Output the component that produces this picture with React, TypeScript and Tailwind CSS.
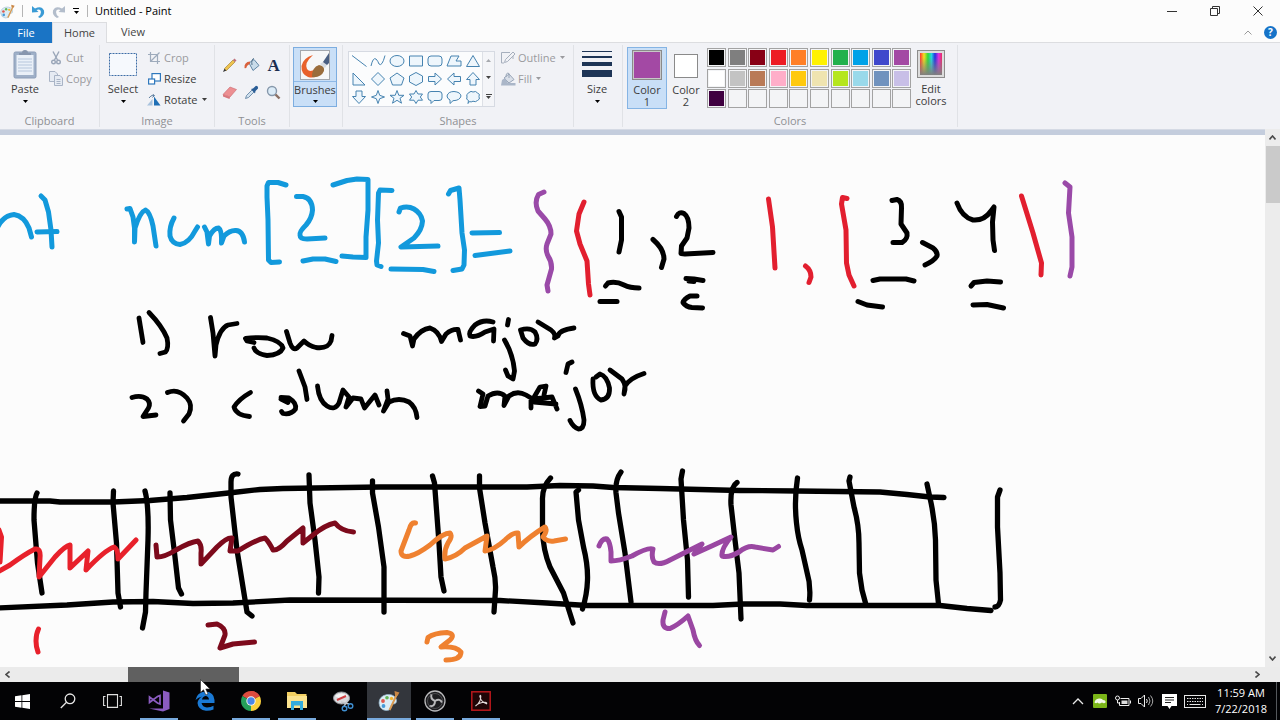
import type { ReactNode } from 'react'
import clsx from 'clsx'

const PALETTE: string[] = [
  '#000000', '#7f7f7f', '#880015', '#ed1c24', '#ff7f27', '#fff200', '#22b14c', '#00a2e8', '#3f48cc', '#a349a4',
  '#ffffff', '#c3c3c3', '#b97a57', '#ffaec9', '#ffc90e', '#efe4b0', '#b5e61d', '#99d9ea', '#7092be', '#c8bfe7',
  '#3f0040', '', '', '', '', '', '', '', '', '',
]

// one entry per gallery cell, drawn on a 16x14 grid
const SHAPES: { name: string; d: string }[] = [
  { name: 'Line', d: 'M1 1.5 L15.5 12.5' },
  { name: 'Curve', d: 'M1 12 Q3 3 6 5 Q8 7 9 10 Q12 13 15 1.5' },
  { name: 'Oval', d: 'M1 7 A7 5.5 0 1 0 15 7 A7 5.5 0 1 0 1 7 Z' },
  { name: 'Rectangle', d: 'M1.5 2 H14.5 V12 H1.5 Z' },
  { name: 'Rounded rectangle', d: 'M4 2 H12 Q15 2 15 5 V9 Q15 12 12 12 H4 Q1 12 1 9 V5 Q1 2 4 2 Z' },
  { name: 'Polygon', d: 'M5 2 H13 L10 7 H15 V12 H1 Z' },
  { name: 'Triangle', d: 'M8 1.5 L14.5 12.5 H1.5 Z' },
  { name: 'Right triangle', d: 'M2 1 V13 H14 Z' },
  { name: 'Diamond', d: 'M8 .5 L14.5 7 L8 13.5 L1.5 7 Z' },
  { name: 'Pentagon', d: 'M8 1 L15 6 L12.5 13 H3.5 L1 6 Z' },
  { name: 'Hexagon', d: 'M8 .5 L14.5 4 V10 L8 13.5 L1.5 10 V4 Z' },
  { name: 'Right arrow', d: 'M1.5 4.5 H8 V1 L14.5 7 L8 13 V9.5 H1.5 Z' },
  { name: 'Left arrow', d: 'M14.5 4.5 H8 V1 L1.5 7 L8 13 V9.5 H14.5 Z' },
  { name: 'Up arrow', d: 'M5 13 V7.5 H1.5 L8 .5 L14.5 7.5 H11 V13 Z' },
  { name: 'Down arrow', d: 'M5 1 V6.5 H1.5 L8 13.5 L14.5 6.5 H11 V1 Z' },
  { name: 'Four-point star', d: 'M8 .5 L9.7 5.3 L14.5 7 L9.7 8.7 L8 13.5 L6.3 8.7 L1.5 7 L6.3 5.3 Z' },
  { name: 'Five-point star', d: 'M8 .5 L9.8 5.3 H15 L11 8.3 L12.5 13.2 L8 10.3 L3.5 13.2 L5 8.3 L1 5.3 H6.2 Z' },
  { name: 'Six-point star', d: 'M8 .5 L10 4 H14.5 L12.3 7 L14.5 10.2 H10 L8 13.5 L6 10.2 H1.5 L3.7 7 L1.5 4 H6 Z' },
  { name: 'Rounded callout', d: 'M4 1.5 H12 Q15 1.5 15 4 V8 Q15 10.5 12 10.5 H7 L4 13.5 V10.5 Q1 10.5 1 8 V4 Q1 1.5 4 1.5 Z' },
  { name: 'Oval callout', d: 'M4 10 Q1 8.5 1 6 Q2 1.5 8 1.5 Q14.5 2 15 6 Q14 10.5 7 10.7 L4 13.5 Z' },
  { name: 'Cloud callout', d: 'M4 2.5 Q6 .5 8 2 Q11 .5 12.5 3 Q15.5 4 14 6.5 Q15.5 9.5 12.5 10.5 Q10.5 12.5 8 11.2 Q6 12.5 4.5 11.5 L3 13.5 L3.5 10.5 Q.5 9.5 2 7 Q.5 4.5 4 2.5 Z' },
]

type Stroke = { color: string; width: number; d: string[] }

const STROKES: Stroke[] = [
  // memory row
  {
    color: '#000000',
    width: 5.3,
    d: [
      'M-5 501 L50 501 L60 502 L113 502 L150 500.5 L187 497.5 L233 492.5 L260 489.5 L283 488.5 L380 487 L527 487 L560 485.5 L593 486 L613 487.5 L660 488.5 L740 490.5 L797 491 L880 492 L907 494.5 L930 497 L944 497.5',
      'M-5 608 L67 605 L113 602 L153 601.5 L193 603.5 L233 603 L290 600 L500 600.5 L547 603 L587 605.5 L713 605.5 L743 604 L780 604 L807 605.5 L940 605.5 L967 608.5 L991 610.5',
      'M37 493 Q34 498 34 520 L37.5 563 L42 593',
      'M113.5 491 L113 503 L116.5 543 L118 593 L120.5 607',
      'M145 491 Q149 506 148 540 L146 593 L145.5 612 L142.5 628',
      'M170 493 L170.5 520 L175 557 L178.5 588 L181.5 594',
      'M238 474 Q231 473 231 482 L231 497 L237 550 L247 612 L252 616',
      'M309 475 L310 503 L315 540 L319 577 L318.5 593',
      'M372.5 481 L372.5 493 L378.5 527 L384 567 L384 612',
      'M432.5 476 L434.5 483 L436 503 L439 543 L441 577 L444 591',
      'M479.5 476 L479.5 488 L485 523 L493 567 Q496 580 495.5 590 L494 612',
      'M550.5 478 Q542 487 542.5 500 L542.5 530 Q543 550 550 567 L563.5 593 L573 623',
      'M578.5 490 L576 492 L578.5 520 L583.5 547 Q588 565 587.5 580 Q587 595 582.5 609',
      'M621 472 Q615 480 616 493 L618.5 513 L625 553 L631 602',
      'M682.5 471 L681 479 L683.5 520 L687.5 560 L688.5 597',
      'M737 482.5 Q730 487 731 505 L735 540 L739 573 L741 619',
      'M797.5 478 Q794 500 796.5 523 Q798 538 802 550 L806.5 570 Q811 585 809.5 600',
      'M850 477 L849 481 L854 507 Q859 525 859 543 L859.5 573 L862 590 L865.5 603',
      'M927 484 L930 498 Q935 520 935.5 540 L936 580 L938.5 604',
      'M1000 490 L997.5 497 L997.5 527 L1000 573 L1000.5 600 Q999 607 995 607',
    ],
  },
  // declaration
  {
    color: '#1299dc',
    width: 5,
    d: [
      'M-4 230 L0 223 Q6 215 14 214.5 Q24 216 29 228 L31.5 237',
      'M41 196 L45 200 L48.5 212 L51 230 L52 247',
      'M37 232 L57 231.5',
      'M127 209 L130 208.5 L133 217 L134.5 228 L134.5 242 L135 228 Q140 212 145.5 210 Q150 212 153 226 L156 246',
      'M174 218 Q169 227 170 236 Q172 244 180 244.5 Q189 243 195 231 L197.5 227',
      'M204.5 227 L207 232 L208.5 244 L209.5 236 Q214 228 218.5 228 Q222 230 221.5 243 L224 236 Q230 230 236 230.5 Q243 231 244.5 242',
      'M286 185 L278 182.5 L268.5 182.5 L267 186 L267 197 L268 220 L268.5 260 L271 262.5 L279.5 262',
      'M296.5 196.5 L303 196.5 Q312 198 312.5 210 Q312 218 306 225 Q299 232 300 235 Q300 239 307 239 L325 238',
      'M303 261 L313 259 L325 259 L336 261.5',
      'M333 185 L347 180.5 L357 179 L368 179.5 L368 210 L366 237 L366 257.5 L353 257 L342 256',
      'M392 190.5 L380 190 L378.5 193 L377.5 220 L378.5 243 L376.5 261 L377 265 L381 266.5',
      'M399 212 L400.5 208 Q408 205.5 414 209 Q421 213 422.5 221 Q422 230 414 238 L401 247 L438 246',
      'M391 269 L423 269.5 L434 271.5',
      'M448.5 194 L450.5 190.5 L459 188 L460 200 L462 233 L464.5 250 L464 265 L462 269 L453 270.5',
      'M472 233 L499.5 232.5',
      'M475 255.5 L510 251',
    ],
  },
  {
    color: '#9a4aa8',
    width: 5,
    d: [
      'M544 192 L538.5 194.5 Q534 202 538 211 L545 219 Q551 226 551 234 L547 244 Q545 250 548 256 Q552 262 551.5 269 L547 285 L548 291',
      'M1065 183 L1070 187 L1068.5 213 L1072 237 L1072 267 L1070 276',
    ],
  },
  {
    color: '#e21f2f',
    width: 5,
    d: [
      'M584 202 L579 214 L576.5 231 L580 244 L587 261 L588.5 284 L590 295',
      'M768.5 199 L772.5 227 L775 268',
      'M805.5 266 Q811 270 811 277 L809 282.5',
      'M847 198.5 L842.5 197.5 L841.5 204 L846 230 L846.5 263 L849 275 L854 286',
      'M1021.5 196 L1033 233 L1041.5 263 L1041 275',
    ],
  },
  {
    color: '#000000',
    width: 5,
    d: [
      'M619 211.5 L621.5 217 L621.5 240 L619 252',
      'M653 239.5 Q664 249 664 259 L661.5 267.5',
      'M676.5 216.5 Q679 211 684 213.5 Q689 217 689 228 L687 238 L681.5 246 L681 253.5 L685 254 L713 252.5',
      'M605.5 286 L608 283 Q616 281 624 285 Q630 288 639 288',
      'M600 301.5 L617 301.5',
      'M686 278.5 L694 279 L703 280.5 M689 281 L694 281.5',
      'M697 296 L690 296 Q684 299 683 302.5 Q686 307 692 307.5 L702.5 308',
      'M892 200.5 L897 199.5 Q902 201 901.5 208 L901 224 L907 233 Q908 239 902 242.5 L893 242.5',
      'M922.5 242.5 L933 248 Q938 252 937 256 Q934 261 925 265',
      'M957 203 Q962 217 973 220 Q984 221 991 211 L994 207 L992.5 222 L993 240 L994.5 250.5',
      'M873 280.5 L880 279 L906 279 L914 281',
      'M858 301.5 L867 305 L882.5 307',
      'M971 286 L974 282.5 L987 281 L1000.5 282',
      'M973 305 L987 304.5 L1003.5 308',
    ],
  },
  // notes
  {
    color: '#000000',
    width: 4.8,
    d: [
      'M139 318 L143 342.5',
      'M149 312.5 Q162 326 167 338 Q169 348 165.5 352 L160 353.5',
      'M210.5 317.5 L213 333 L215 356 L216 345 Q220 328 228 325 L237 323.5',
      'M254 342.5 L247 341 L245.5 338.5 Q256 337 267 338 Q281 341 283 348 Q280 355 267 355.5 Q256 354 254 348',
      'M286.5 331.5 L290 343 Q293 351 297 348 L304 341 Q309 346 316 347.5 Q328 349 331 341 L332 335.5',
      'M403.5 333.5 L410 336 L412.5 346 L414 339 Q421 329 430 328 Q439 331 441.5 341.5 L446 334 Q452 329 458 329.5 L460.5 340',
      'M493 322 Q483 319 475 325 Q468 332 470 336 Q476 338 485 332 L494 329 L493.5 341',
      'M508.5 319.5 L507.5 325',
      'M504.5 340 Q513 354 514.5 371 L513 379 L508 376 L505.5 370',
      'M520.5 330 L523 338 Q529 346 535 344 Q539 339 535 332 Q530 327 520.5 330',
      'M538 322 L551 330 Q556 334 554.5 338 L558 336 Q559 330 574 328',
      'M132 397.5 Q141 394.5 147 399 Q151 403 148.5 408 L143 416.5 L156 415',
      'M167.5 392.5 Q178 388 187 398 Q193 405 189 414 L183.5 421',
      'M250.5 392.5 Q239 399 234 407 Q236 415 249.5 416.5',
      'M281 397.5 L289 398 Q297 403 295.5 409 Q291 415 283 413.5 L281.5 411.5 M281 399 L288 402.5',
      'M299 371 L305 387 L307 399.5',
      'M317.5 386 Q319 401 327 406 Q335 411 339 403 L343 390 L349 397 L346 407 L353 398 L361 399 L364.5 408 L375 395 L379 405',
      'M387 391 L388 399 L383.5 411 L389 402 Q399 397 409 402 Q416 407 417 417.5',
      'M478.5 391 L483 394 L480 406.5 L485 406 L488 396 Q498 390 505 396 L504 405.5 L509 396 Q517 390 526 395 L531 398 L531 408',
      'M544 395 L546 386 L540 387 L533 399 L552 397 L557 409 M534 402 L556 404',
      'M566 372.5 L568 364 L572 362',
      'M575.5 389 Q582 405 584 420 Q584 429 578.5 429 Q573 427 570 420.5',
      'M593 379 Q592 396 601 400 Q610 399 609.5 388 Q607 376 600 374 L596 377',
      'M610 370 L622 379 Q627 386 624 394 L625 386 Q630 378 644 373.5',
    ],
  },
  // values stored in each cell
  {
    color: '#e8212b',
    width: 5,
    d: [
      'M-1 530 L1.5 537 L0 562',
      'M-4 573 L10 565 Q25 554 35 549 Q41 548 40 558 L39 577 L55 557 Q65 546 70 545 L70 568 L88 551 L86 570 Q105 550 114 547 Q118 549 118 559 L136 540',
      'M38.5 629 Q36 634 36 641 Q36 647 38 652',
    ],
  },
  {
    color: '#7d0a1c',
    width: 5,
    d: [
      'M156 545 L157 557 Q165 557 176 550 Q190 542 198 541 Q202 545 201 553 L201 564 L217 547 Q227 537 232 538 L230 551 L238 551 Q255 540 265 538 Q269 542 273 550 Q278 551 287 541 L303 528 L303 543 L313 535 Q325 525 335 523 Q341 531 353.5 532',
      'M208 625 L217 624 Q226 628 225 635 L220 648 L233 644 L254.5 642',
    ],
  },
  {
    color: '#ef8130',
    width: 5,
    d: [
      'M415.5 523 Q411 522 409 530 L401 551 Q401 558 410 556 Q418 554 430 545 Q443 533 450 533 Q453 536 448 543 Q444 550 445 559 Q456 557 465 548 L487 536 L485 551 Q494 550 505 540 Q513 532 518 533 L519 547 Q530 536 545 527 Q548 530 543 537 Q547 542 554 541 L565.5 539',
      'M427 642 L428 637.5 Q434 633 447 632.5 Q456 634 450 640 L441 647 Q456 646 461 652 Q461 660 446 660',
    ],
  },
  {
    color: '#9a47a2',
    width: 5,
    d: [
      'M599 546 Q602 538 607 539 Q610 542 611 552 L611 561 Q619 561 632 556 Q648 547 653 549 Q651 557 654 562 Q659 566 670 560 L702 544 L694 554 Q712 546 731 537 Q721 549 722 556 Q729 558 739 552 Q748 545 755 547 L773 550 L778.5 546.5',
      'M665 612 L663 620 Q662 629 670 628.5 Q678 625 688 616 L693 630 Q695 641 699.5 645.5',
    ],
  },
]

function Caret({ className }: { className?: string }) {
  return (
    <svg className={className} width="5" height="3" viewBox="0 0 5 3" aria-hidden="true">
      <path d="M0 0 H5 L2.5 3 Z" fill="currentColor" />
    </svg>
  )
}

function PaintLogo({ size }: { size: number }) {
  return (
    <svg width={size} height={size} viewBox="0 0 22 22" aria-hidden="true">
      <path d="M1 13 Q1 6 9 4.500 Q17 4 18.500 10 Q19 14 15 14 Q12.500 14.500 13 17 Q12.500 21 7.500 20.500 Q1.500 19.500 1 13 Z" fill="#dcecf5" stroke="#8fb0c6" strokeWidth=".7" />
      <circle cx="5" cy="11" r="1.900" fill="#e0584e" />
      <circle cx="9" cy="7.700" r="1.800" fill="#62b558" />
      <circle cx="13.500" cy="8.500" r="1.700" fill="#f2b632" />
      <circle cx="5.500" cy="16" r="1.900" fill="#469ad8" />
      <path d="M18.500 5 L13 17 L11.500 20" stroke="#d99a52" strokeWidth="2" fill="none" />
      <path d="M16.500 1 L21.500 2.500 L19.500 6 L17 5 Z" fill="#c98644" />
    </svg>
  )
}

function RibbonGroup({ label, className, children }: { label?: string; className: string; children: ReactNode }) {
  return (
    <section className={clsx('my-0.5 flex shrink-0 flex-col border-r border-[#e0e2e6]', className)}>
      <div className="flex flex-1 items-start">{children}</div>
      <div className="h-3 text-center leading-3 text-[#8f9094]">{label}</div>
    </section>
  )
}

function SmallButton({ icon, label, disabled, caret }: { icon: ReactNode; label: string; disabled?: boolean; caret?: boolean }) {
  return (
    <button type="button" disabled={disabled} className={clsx('flex h-[21px] items-center gap-1', disabled ? 'text-[#9a9a9e]' : 'text-[#3c3c3c]')}>
      <span className="flex w-3 justify-center">{icon}</span>
      {label}
      {caret && <Caret />}
    </button>
  )
}

function ClipboardGroup() {
  return (
    <RibbonGroup label="Clipboard" className="w-[100px]">
      <button type="button" className="ml-1 flex w-[42px] flex-col items-center pt-1 text-[#3c3c3c]">
        <svg width="24" height="30" viewBox="0 0 24 30" aria-hidden="true">
          <rect x="1" y="3" width="22" height="26" rx="1.500" fill="#9fb0c8" stroke="#8c9db8" />
          <rect x="3.500" y="6" width="17" height="20" fill="#eaf0f8" />
          <path d="M5 10 H19 M5 13 H19 M5 16 H19 M5 19 H19 M5 22 H19" stroke="#b6c6dc" />
          <path d="M6 6 V4 H9 Q9 1 12 1 Q15 1 15 4 H18 V6 Z" fill="#8796ae" />
        </svg>
        <span className="leading-5">Paste</span>
        <Caret className="mt-px text-black" />
      </button>
      <div className="ml-1 flex flex-col pt-0.5">
        <SmallButton
          disabled
          label="Cut"
          icon={
            <svg width="10" height="14" viewBox="0 0 10 14" fill="none" stroke="#9aa6b8" strokeWidth="1.400" aria-hidden="true">
              <path d="M2 .5 L6.500 9 M8 .5 L3.500 9" />
              <circle cx="2.500" cy="11" r="1.800" />
              <circle cx="7.500" cy="11" r="1.800" />
            </svg>
          }
        />
        <SmallButton
          disabled
          label="Copy"
          icon={
            <svg width="14" height="15" viewBox="0 0 14 15" className="shrink-0" fill="#e6ebf3" stroke="#a9b4c6" aria-hidden="true">
              <path d="M.5 .5 H6 L8.500 3 V10.500 H.5 Z" />
              <path d="M5.500 4.500 H11 L13.500 7 V14.500 H5.500 Z M7.500 8.500 H11.500 M7.500 10.500 H11.500 M7.500 12.500 H11.500" />
            </svg>
          }
        />
      </div>
    </RibbonGroup>
  )
}

function ImageGroup() {
  return (
    <RibbonGroup label="Image" className="w-[115px]">
      <button type="button" className="ml-0.5 flex w-[42px] flex-col items-center pt-1 text-[#3c3c3c]">
        <svg width="30" height="30" viewBox="0 0 30 30" aria-hidden="true">
          <rect x="1.500" y="4.500" width="27" height="22" fill="#f6f9fd" stroke="#3d6da6" strokeDasharray="2 1" />
        </svg>
        <span className="leading-5">Select</span>
        <Caret className="mt-px text-black" />
      </button>
      <div className="ml-1 flex flex-col pt-0.5">
        <SmallButton
          disabled
          label="Crop"
          icon={
            <svg width="12" height="12" viewBox="0 0 12 12" fill="none" stroke="#9eabbc" strokeWidth="1.200" aria-hidden="true">
              <path d="M2.500 0 V9.500 H12 M0 2.500 H9.500 V12 M3 9 L11.500 .5" />
            </svg>
          }
        />
        <SmallButton
          label="Resize"
          icon={
            <svg width="13" height="12" viewBox="0 0 13 12" className="shrink-0" fill="#fff" stroke="#2f78bd" strokeWidth="1.200" aria-hidden="true">
              <rect x="4" y=".6" width="8.400" height="7.400" />
              <rect x=".6" y="6" width="6" height="5" />
            </svg>
          }
        />
        <SmallButton
          caret
          label="Rotate"
          icon={
            <svg width="14" height="12" viewBox="0 0 14 12" className="shrink-0" aria-hidden="true">
              <path d="M0 11.500 H5.500 V5 Z" fill="#a9c3de" />
              <path d="M7 11.500 H13.500 L7 2.500 Z" fill="#1f6fb5" />
              <path d="M2 4 Q3.500 1 7 1.500 M5.500 0 L7.500 1.500 L5.500 3.500" fill="none" stroke="#5e7fa0" />
            </svg>
          }
        />
      </div>
    </RibbonGroup>
  )
}

function ToolsGroup() {
  const tools: { name: string; art: ReactNode }[] = [
    {
      name: 'Pencil',
      art: (
        <>
          <path d="M1 14 L2.500 10.500 L4.500 12.500 Z" fill="#333" />
          <path d="M2.500 10.500 L11 2 L13 4 L4.500 12.500 Z" fill="#eec34e" stroke="#9b7b2c" strokeWidth=".6" />
          <path d="M11 2 L12.500 .5 L14.500 2.500 L13 4 Z" fill="#c0707a" />
        </>
      ),
    },
    {
      name: 'Fill with color',
      art: (
        <>
          <path d="M5 5 L10 1.500 L15 7.500 L9 12.500 Z" fill="#c9dcea" stroke="#6287a5" />
          <path d="M8 7 Q7 1 10 .5" fill="none" stroke="#55738c" />
          <path d="M6 3.500 Q0 4 .5 10 Q2.500 11 3 8 L6 5.500 Z" fill="#d9613d" />
        </>
      ),
    },
    {
      name: 'Text',
      art: (
        <text x="1.500" y="13" className="font-['Liberation_Serif',serif] text-[17px] font-bold" fill="#1c2e50">
          A
        </text>
      ),
    },
    {
      name: 'Eraser',
      art: (
        <>
          <path d="M1 9.500 L8 2 L14.500 4.500 L8 12 Z" fill="#ec8f92" stroke="#c9686e" strokeWidth=".6" />
          <path d="M1 9.500 L8 12 L7.500 14 L1 11.500 Z" fill="#d8767c" />
        </>
      ),
    },
    {
      name: 'Color picker',
      art: (
        <>
          <path d="M1.500 13.500 L2.500 10.500 L8 5 L10 7 L4.500 12.500 Z" fill="#cfe0ee" stroke="#56789a" strokeWidth=".8" />
          <path d="M7 4 L9 3.500 L12 .8 Q14.500 1 14 3.500 L11.500 6 L11 8.500 Z" fill="#2a5d96" />
        </>
      ),
    },
    {
      name: 'Magnifier',
      art: (
        <>
          <circle cx="6" cy="6" r="4.500" fill="#dcecf8" stroke="#8698ab" strokeWidth="1.400" />
          <path d="M9.500 9.500 L13.500 13.500" stroke="#8a6f63" strokeWidth="2.400" />
        </>
      ),
    },
  ]
  return (
    <RibbonGroup label="Tools" className="w-[75px]">
      <div className="mr-auto ml-[7px] grid grid-cols-3 gap-x-[7px] gap-y-3 pt-[13px]">
        {tools.map((tool) => (
          <button key={tool.name} type="button" aria-label={tool.name}>
            <svg width="15" height="15" viewBox="0 0 15 15" className="overflow-visible">{tool.art}</svg>
          </button>
        ))}
      </div>
    </RibbonGroup>
  )
}

function BrushesGroup() {
  return (
    <RibbonGroup className="w-[53px]">
      <button type="button" className="mt-0.5 ml-[3px] flex h-[60px] w-11 flex-col items-center border border-[#7cade0] bg-[#c9dff7] text-[#3c3c3c]">
        <span className="flex h-[34px] w-full justify-center border-b border-[#8fb9e6] pt-0.5">
          <svg width="30" height="30" viewBox="0 0 30 30" aria-hidden="true">
            <rect x=".5" y=".5" width="29" height="29" fill="#f6f7f8" stroke="#a3a7ad" />
            <path d="M13 5 Q3 8 1.500 16 Q1 24 8 27 Q15 29 19 24 L15 19 Q10 23 7 19 Q4 13 13 5 Z" fill="#e8612b" />
            <path d="M12 27 Q12 17 19 15 Q25 16 24 21 Q21 28 12 27 Z" fill="#9a6d3c" />
            <path d="M20 14 L24 11 L27 15 L25 18 Z" fill="#d8dce2" />
            <path d="M23 12 L29 3 V13 L27 15 Z" fill="#4a5f82" />
          </svg>
        </span>
        <span className="leading-4">Brushes</span>
        <Caret className="mt-0.5 text-black" />
      </button>
    </RibbonGroup>
  )
}

function ShapesGroup() {
  return (
    <RibbonGroup label="Shapes" className="w-[231px]">
      <div className="mt-[6px] ml-[5px] flex h-14 border border-[#d6dae2] bg-[#fbfcfd]">
        <div className="grid grid-cols-7">
          {SHAPES.map((shape) => (
            <button key={shape.name} type="button" aria-label={shape.name} className="flex w-[19px] items-center justify-center">
              <svg width="16" height="14" viewBox="0 0 16 14">
                <path d={shape.d} fill={shape.d.endsWith('Z') ? '#eef6fc' : 'none'} stroke="#4683b0" strokeLinejoin="round" />
              </svg>
            </button>
          ))}
        </div>
        <div className="flex w-3 flex-col items-center justify-around border-l border-[#dde0e6] bg-[#f4f5f8]">
          <button type="button" aria-label="Previous shapes" className="text-[#a6a9ae]">
            <Caret className="rotate-180" />
          </button>
          <button type="button" aria-label="Next shapes" className="text-[#444]">
            <Caret />
          </button>
          <button type="button" aria-label="All shapes" className="flex flex-col items-center gap-px text-[#444]">
            <span className="h-px w-1.5 bg-[#444]" />
            <Caret />
          </button>
        </div>
      </div>
      <div className="ml-[7px] flex flex-col pt-0.5">
        <SmallButton
          disabled
          caret
          label="Outline"
          icon={
            <svg width="15" height="13" viewBox="0 0 15 13" className="shrink-0" fill="none" stroke="#a6afbd" aria-hidden="true">
              <path d="M9 1.500 H.5 V12 H3 M12 8 V5 M3.500 11.500 L4.500 8.500 L12 1 L14 3 L6.500 10.500 Z" />
            </svg>
          }
        />
        <SmallButton
          disabled
          caret
          label="Fill"
          icon={
            <svg width="15" height="14" viewBox="0 0 15 14" className="shrink-0" aria-hidden="true">
              <path d="M3 6 L8 2 L13 7.500 L8 11 Z" fill="#d9dfe8" stroke="#98a5b8" />
              <path d="M5 5 Q5 0 8 1.500 V6" fill="none" stroke="#98a5b8" />
              <path d="M0 13.500 L1 8 L4 6 L7 11 H14.500 V13.500 Z" fill="#aab6c8" />
            </svg>
          }
        />
      </div>
    </RibbonGroup>
  )
}

function SizeGroup() {
  return (
    <RibbonGroup className="w-[49px]">
      <button type="button" className="ml-px flex w-11 flex-col items-center pt-1.5 text-[#3c3c3c]">
        <span className="flex h-7 w-[30px] flex-col gap-1">
          <span className="h-px bg-[#1e3556]" />
          <span className="h-0.5 bg-[#1e3556]" />
          <span className="h-1 bg-[#1e3556]" />
          <span className="h-[7px] bg-[#1e3556]" />
        </span>
        <span className="leading-5">Size</span>
        <Caret className="mt-px text-black" />
      </button>
    </RibbonGroup>
  )
}

function ColorsGroup() {
  return (
    <RibbonGroup label="Colors" className="w-[335px]">
      <button type="button" className="mt-0.5 ml-1 flex h-[62px] w-10 flex-col items-center border border-[#85b4e4] bg-[#c9dff7] pt-0.5 leading-3 text-[#3c3c3c]">
        <span className="mb-1 size-[30px] border border-[#8a8a8a] bg-[#a349a4] p-px outline-1 -outline-offset-2 outline-[#c8c8c8]" />
        Color
        <br />1
      </button>
      <button type="button" className="mt-0.5 flex h-[62px] w-[38px] flex-col items-center pt-[7px] leading-3 text-[#3c3c3c]">
        <span className="mb-1.5 size-6 border border-[#8a8a8a] bg-white" />
        Color
        <br />2
      </button>
      <div className="mt-[3px] ml-0.5 grid h-[62px] w-[206px] grid-cols-10">
        {PALETTE.map((color, i) => (
          <button
            key={i}
            type="button"
            aria-label={color || 'Empty color slot'}
            className="size-[19px] border border-[#a3a3a3] bg-[#f3f4f6] p-px"
          >
            {color && <span className="block size-full" style={{ backgroundColor: color }} />}
          </button>
        ))}
      </div>
      <button type="button" className="flex w-9 flex-col items-center pt-[5px] leading-3 text-[#3c3c3c]">
        <span className="mb-[5px] size-7 border border-[#8c8c8c] bg-[#dcdcdc] p-0.5">
          <svg className="size-full" viewBox="0 0 22 22" aria-hidden="true">
            <defs>
              <linearGradient id="hue">
                <stop offset="0" stopColor="#f33" />
                <stop offset=".18" stopColor="#f5e020" />
                <stop offset=".36" stopColor="#30d83a" />
                <stop offset=".52" stopColor="#26d5e0" />
                <stop offset=".68" stopColor="#2433e0" />
                <stop offset=".85" stopColor="#e02fe0" />
                <stop offset="1" stopColor="#e8305c" />
              </linearGradient>
              <linearGradient id="fade" x2="0" y2="1">
                <stop offset=".2" stopColor="#808080" stopOpacity="0" />
                <stop offset="1" stopColor="#808080" />
              </linearGradient>
            </defs>
            <rect width="22" height="22" fill="url(#hue)" />
            <rect width="22" height="22" fill="url(#fade)" />
          </svg>
        </span>
        Edit
        <br />
        colors
      </button>
    </RibbonGroup>
  )
}

function TitleBar() {
  return (
    <header className="flex h-[22px] shrink-0 items-center pr-px text-black">
      <PaintLogo size={15} />
      <span className="mx-[7px] h-3 w-px bg-[#b5b5b5]" />
      <button type="button" aria-label="Undo" className="ml-0.5">
        <svg width="13" height="13" viewBox="0 0 13 13">
          <path d="M0 1 V7.500 L6.500 7 L4.500 5 Q8.500 3.500 9 7 Q9 10 6 12 L8 13 Q13 10 12 5.500 Q9.500 0 3 3.500 Z" fill="#3a9bd5" />
        </svg>
      </button>
      <button type="button" aria-label="Redo" className="ml-[7px]">
        <svg width="13" height="13" viewBox="0 0 13 13">
          <path d="M13 1 V7.500 L6.500 7 L8.500 5 Q4.500 3.500 4 7 Q4 10 7 12 L5 13 Q0 10 1 5.500 Q3.500 0 10 3.500 Z" fill="#b3bdcb" />
        </svg>
      </button>
      <button type="button" aria-label="Customize toolbar" className="ml-2 flex flex-col items-center gap-0.5">
        <span className="h-px w-1.5 bg-black" />
        <Caret />
      </button>
      <span className="mr-[7px] ml-2 h-3 w-px bg-[#b5b5b5]" />
      <h1>Untitled - Paint</h1>
      <div className="ml-auto flex">
        <button type="button" aria-label="Minimize" className="flex h-5 w-[43px] items-center justify-center">
          <svg width="10" height="10" viewBox="0 0 10 10"><path d="M0 5.500 H10" stroke="#333" /></svg>
        </button>
        <button type="button" aria-label="Restore" className="flex h-5 w-[43px] items-center justify-center">
          <svg width="10" height="10" viewBox="0 0 10 10" fill="none" stroke="#333"><path d="M.5 2.500 H7.500 V9.500 H.5 Z M2.500 2 V.5 H9.500 V7.500 H8" /></svg>
        </button>
        <button type="button" aria-label="Close" className="flex h-5 w-[43px] items-center justify-center">
          <svg width="10" height="10" viewBox="0 0 10 10"><path d="M.5 .5 L9.500 9.500 M9.500 .5 L.5 9.500" stroke="#333" /></svg>
        </button>
      </div>
    </header>
  )
}

function RibbonTabs() {
  return (
    <nav className="flex h-[21px] shrink-0 border-b border-[#dcdde0] text-[#444]">
      <button type="button" className="h-[21px] w-[52px] bg-[#1a74c5] text-white">File</button>
      <button type="button" className="h-[21px] w-[55px] border-x border-t border-[#dcdde0] bg-[#f1f2f6]">Home</button>
      <button type="button" className="w-[52px]">View</button>
      <div className="ml-auto flex items-center gap-3 pr-[3px]">
        <button type="button" aria-label="Collapse ribbon">
          <svg width="8" height="5" viewBox="0 0 8 5"><path d="M.5 4.500 L4 1 L7.500 4.500" fill="none" stroke="#9a9a9a" /></svg>
        </button>
        <button type="button" className="size-[13px] rounded-full bg-[#1673c8] text-center text-[10px] leading-[13px] font-bold text-white">?</button>
      </div>
    </nav>
  )
}

function Chevron({ className }: { className?: string }) {
  return (
    <svg className={className} width="7" height="5" viewBox="0 0 7 5" aria-hidden="true">
      <path d="M.5 4.500 L3.500 1 L6.500 4.500" fill="none" stroke="#4a4a4a" strokeWidth="1.600" />
    </svg>
  )
}

function Canvas() {
  return (
    <main className="flex min-h-0 flex-1">
      <div className="flex min-w-0 flex-1 flex-col overflow-hidden">
        <div className="h-1.5 shrink-0 border-t border-[#d5dae4] bg-[#c4cddd]" />
        <svg width="1265" height="532" viewBox="0 135 1265 532" className="block shrink-0" fill="none" strokeLinecap="round" strokeLinejoin="round">
          {STROKES.map((stroke, i) => (
            <g key={i} stroke={stroke.color} strokeWidth={stroke.width}>
              {stroke.d.map((d) => (
                <path key={d} d={d} />
              ))}
            </g>
          ))}
        </svg>
      </div>
      <div className="flex w-[15px] shrink-0 flex-col items-center bg-[#ececec]">
        <button type="button" aria-label="Scroll up" className="flex h-[17px] items-center"><Chevron /></button>
        <div className="h-[57px] w-3.5 bg-[#cacaca]" />
        <button type="button" aria-label="Scroll down" className="mt-auto flex h-[17px] items-center"><Chevron className="rotate-180" /></button>
      </div>
    </main>
  )
}

function HorizontalScrollbar() {
  return (
    <div className="relative flex h-[15px] shrink-0 items-center bg-[#ebebeb]">
      <button type="button" aria-label="Scroll left" className="flex w-[15px] justify-center"><Chevron className="-rotate-90" /></button>
      <div className="ml-[113px] h-full w-[111px] bg-[#606060]" />
      <button type="button" aria-label="Scroll right" className="mr-[15px] ml-auto flex w-[15px] justify-center"><Chevron className="rotate-90" /></button>
      {/* pointer resting on the thumb */}
      <svg className="absolute top-3 left-[200px] z-10" width="11" height="17" viewBox="0 0 11 17" aria-hidden="true">
        <path d="M.5 .5 V13.500 L3.500 10.800 L5.800 16 L8 15 L5.800 10 H10 Z" fill="#fff" stroke="#222" strokeWidth=".6" />
      </svg>
    </div>
  )
}

type TaskItem = { name: string; running?: boolean; active?: boolean; art: ReactNode }

const TASKS: TaskItem[] = [
  {
    name: 'Visual Studio',
    running: true,
    art: (
      <svg width="22" height="22" viewBox="0 0 22 22">
        <path d="M15 .5 L21.500 2.500 V19 L15 21.500 L1 18.500 L15 18.500 Z" fill="#8b5cc0" />
        <path d="M1.500 7 L9.500 13 L12 14 V5.500 L9.500 6.500 L1.500 12.500 Z" fill="none" stroke="#8b5cc0" strokeWidth="1.700" />
      </svg>
    ),
  },
  {
    name: 'Edge',
    art: (
      <svg width="20" height="20" viewBox="0 0 20 20">
        <path d="M.5 9 Q2 1 10.500 .5 Q19 1 19.500 9 V12 H6.500 Q7.500 16 12 16.500 Q16 16.500 18.500 14.800 V18.500 Q15 20 11 19.800 Q3 18.800 2.500 12 Q3 8 7 5.500 Q3.500 6 .5 9 Z M7 8.500 H14 Q13.500 5 10.500 5 Q7.500 5.500 7 8.500 Z" fill="#1a79d4" fillRule="evenodd" />
      </svg>
    ),
  },
  {
    name: 'Chrome',
    running: true,
    art: (
      <svg width="20" height="20" viewBox="0 0 20 20">
        <path d="M10 10 L1.340 5 A10 10 0 0 1 18.660 5 Z" fill="#dd4b3e" />
        <path d="M10 10 L18.660 5 A10 10 0 0 1 10 20 Z" fill="#fbcf3c" />
        <path d="M10 10 L10 20 A10 10 0 0 1 1.340 5 Z" fill="#25a05a" />
        <path d="M10 5.400 H18.900 L18.660 5 A10 10 0 0 0 10 0 Z" fill="#dd4b3e" />
        <circle cx="10" cy="10" r="4.700" fill="#f4f4f4" />
        <circle cx="10" cy="10" r="3.700" fill="#4a86e8" />
      </svg>
    ),
  },
  {
    name: 'File Explorer',
    running: true,
    art: (
      <svg width="20" height="18" viewBox="0 0 20 18">
        <path d="M0 0 H8 L10 2 H19.500 V16 H0 Z" fill="#f2cf62" />
        <path d="M0 4 H20 V16 H0 Z" fill="#fbe38f" />
        <path d="M4 9 H16 V18 H13 V13.500 H7 V18 H4 Z" fill="#33acdc" />
      </svg>
    ),
  },
  {
    name: 'Snipping Tool',
    art: (
      <svg width="21" height="21" viewBox="0 0 21 21">
        <ellipse cx="8.500" cy="7" rx="8" ry="6" fill="#d9dadd" stroke="#97999e" />
        <path d="M2 5 Q8 0 15 5 L8 8 Z" fill="#f6f6f6" />
        <path d="M4 9 L13 5" stroke="#cf3f43" strokeWidth="2" />
        <path d="M8 11 L16 13 M16 8 L11 15" stroke="#c3c7cc" strokeWidth="1.300" />
        <circle cx="11.500" cy="17.500" r="2.300" fill="none" stroke="#3f8fd1" strokeWidth="1.400" />
        <circle cx="17.500" cy="15" r="2.300" fill="none" stroke="#3f8fd1" strokeWidth="1.400" />
      </svg>
    ),
  },
  { name: 'Paint', running: true, active: true, art: <PaintLogo size={22} /> },
  {
    name: 'OBS',
    running: true,
    art: (
      <svg width="22" height="22" viewBox="0 0 22 22" fill="none" stroke="#b9b9bb">
        <circle cx="11" cy="11" r="10" fill="#1d1d20" strokeWidth="1.300" />
        <path d="M11 11 Q6 9 7.500 4 M11 11 Q16 8 18 12.500 M11 11 Q11 17 5.500 16" strokeWidth="2" />
        <circle cx="11" cy="11" r="7.500" stroke="#6b6b6e" strokeWidth=".6" />
      </svg>
    ),
  },
  {
    name: 'Acrobat Reader',
    running: true,
    art: (
      <svg width="20" height="20" viewBox="0 0 20 20" fill="none">
        <rect x=".8" y=".8" width="18.400" height="18.400" fill="#1f0506" stroke="#b8181c" strokeWidth="1.500" />
        <path d="M4.500 15 Q10 11.500 9.800 5 Q9 3.500 8.800 5.500 Q10 11 15.500 12.800 Q16.500 11.500 14 11.300 Q8 11.500 4.500 15 Z" stroke="#e4dada" strokeWidth="1.100" />
      </svg>
    ),
  },
]

function Taskbar() {
  return (
    <footer className="flex h-[38px] shrink-0 bg-[#030305] text-white">
      <button type="button" aria-label="Start" className="flex w-[45px] items-center justify-center">
        <svg width="15" height="15" viewBox="0 0 15 15">
          <path d="M0 2.200 L6.500 1.300 V7 H0 Z M7.300 1.200 L15 0 V7 H7.300 Z M0 8 H6.500 V13.700 L0 12.800 Z M7.300 8 H15 V15 L7.300 13.800 Z" fill="#fff" />
        </svg>
      </button>
      <button type="button" aria-label="Search" className="flex w-[45px] items-center justify-center">
        <svg width="16" height="16" viewBox="0 0 16 16" fill="none" stroke="#e6e6e6" strokeWidth="1.300">
          <circle cx="10" cy="5.800" r="4.800" />
          <path d="M6.500 9.300 L.8 15" />
        </svg>
      </button>
      <button type="button" aria-label="Task view" className="mr-px flex w-[45px] items-center justify-center">
        <svg width="19" height="14" viewBox="0 0 19 14" fill="none" stroke="#dedede" strokeWidth="1.100">
          <path d="M4.500 .6 H14.500 V13.400 H4.500 Z M2.500 2.500 H.6 V11.500 H2.500 M16.500 2.500 H18.400 V11.500 H16.500" />
        </svg>
      </button>
      {TASKS.map((task) => (
        <button
          key={task.name}
          type="button"
          aria-label={task.name}
          className={clsx('relative flex w-[46px] items-center justify-center', task.active && 'bg-[#33363c] bg-clip-content px-px')}
        >
          {task.art}
          {task.running && (
            <span className={clsx('absolute bottom-0 h-0.5 bg-[#78aadd]', task.active ? 'inset-x-px' : 'inset-x-1')} />
          )}
        </button>
      ))}
      <div className="ml-auto flex items-center">
        <svg className="mr-[9px]" width="12" height="7" viewBox="0 0 12 7" aria-hidden="true">
          <path d="M1 6 L6 1 L11 6" fill="none" stroke="#e8e8e8" strokeWidth="1.300" />
        </svg>
        <svg className="mr-2" width="14" height="14" viewBox="0 0 14 14" aria-hidden="true">
          <rect width="14" height="14" rx="1" fill="#7bb518" />
          <path d="M1.500 8.500 Q2 5 6 4.500 Q9 4 10 6 Q13 6 12.500 8.500 Q11 10 9 8.500 Q6 10.500 4.500 8.500 Q3 10 1.500 8.500 Z" fill="#f2f8e6" />
        </svg>
        <svg className="mr-[7px]" width="16" height="12" viewBox="0 0 16 12" fill="none" stroke="#eee" aria-hidden="true">
          <path d="M5.500 3.500 H14 V10.500 H4.500 V7 M15.500 5.500 V8.500" />
          <path d="M6.500 5.500 H12.500 V9 H6.500 Z" fill="#ddd" stroke="none" />
          <circle cx="2.500" cy="3" r="2" />
          <path d="M2.500 5 V8 H4" />
        </svg>
        <svg className="mr-2" width="16" height="14" viewBox="0 0 16 14" fill="none" stroke="#eee" aria-hidden="true">
          <path d="M.5 4.500 H3 L6.500 1 V13 L3 9.500 H.5 Z" />
          <path d="M8.500 5 Q10 7 8.500 9" />
          <path d="M10.500 3 Q13.500 7 10.500 11 M12.500 1.500 Q17 7 12.500 12.500" stroke="#aaa" />
        </svg>
        <svg className="mr-[7px]" width="15" height="15" viewBox="0 0 15 15" aria-hidden="true">
          <path d="M0 0 H15 V12 H9.500 L7.500 15 L5.500 12 H0 Z" fill="#fff" />
          <path d="M3 3.500 H12 M3 6 H12 M3 8.500 H9" stroke="#222" />
        </svg>
        <svg width="22" height="13" viewBox="0 0 22 13" fill="none" stroke="#e6e6e6" aria-hidden="true">
          <rect x=".5" y=".5" width="21" height="12" />
          <path d="M3 3.500 H19 M3 6.500 H19" strokeDasharray="1.500 1" />
          <path d="M5.500 9.500 H16.500 M3 9.500 H4 M18 9.500 H19" />
        </svg>
        <div className="w-[70px] text-center leading-4">
          <div>11:59 AM</div>
          <div>7/22/2018</div>
        </div>
        <span className="mr-[3px] h-[38px] w-px bg-[#55585c]" />
      </div>
    </footer>
  )
}

export default function App() {
  return (
    <div className="flex h-screen flex-col overflow-hidden bg-[#fcfcfc] font-['Open_Sans','Noto_Sans',sans-serif] text-[11px] leading-4">
      <TitleBar />
      <RibbonTabs />
      <div className="flex h-[86px] shrink-0 bg-[#f1f2f6]">
        <ClipboardGroup />
        <ImageGroup />
        <ToolsGroup />
        <BrushesGroup />
        <ShapesGroup />
        <SizeGroup />
        <ColorsGroup />
      </div>
      <Canvas />
      <HorizontalScrollbar />
      <Taskbar />
    </div>
  )
}
